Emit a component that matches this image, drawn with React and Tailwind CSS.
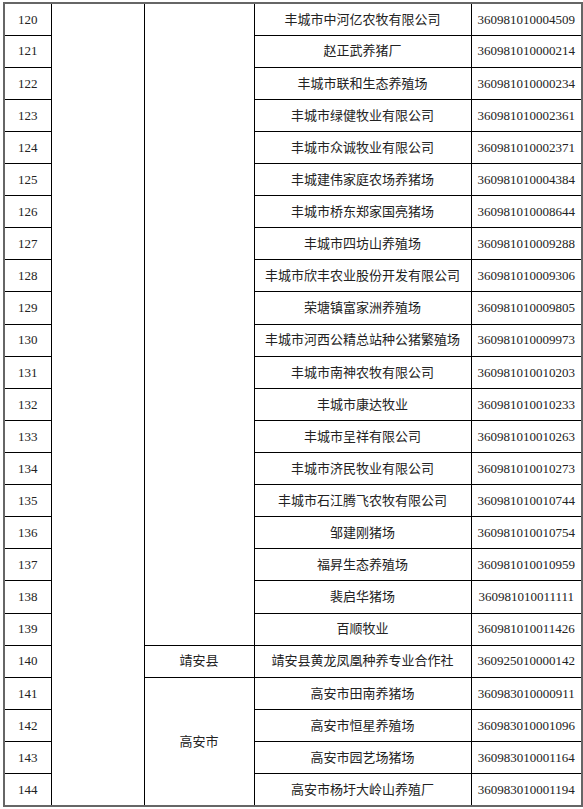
import React from "react";

const rows = [
  ["120", "丰城市中河亿农牧有限公司", "360981010004509"],
  ["121", "赵正武养猪厂", "360981010000214"],
  ["122", "丰城市联和生态养殖场", "360981010000234"],
  ["123", "丰城市绿健牧业有限公司", "360981010002361"],
  ["124", "丰城市众诚牧业有限公司", "360981010002371"],
  ["125", "丰城建伟家庭农场养猪场", "360981010004384"],
  ["126", "丰城市桥东郑家国亮猪场", "360981010008644"],
  ["127", "丰城市四坊山养殖场", "360981010009288"],
  ["128", "丰城市欣丰农业股份开发有限公司", "360981010009306"],
  ["129", "荣塘镇富家洲养殖场", "360981010009805"],
  ["130", "丰城市河西公精总站种公猪繁殖场", "360981010009973"],
  ["131", "丰城市南神农牧有限公司", "360981010010203"],
  ["132", "丰城市康达牧业", "360981010010233"],
  ["133", "丰城市呈祥有限公司", "360981010010263"],
  ["134", "丰城市济民牧业有限公司", "360981010010273"],
  ["135", "丰城市石江腾飞农牧有限公司", "360981010010744"],
  ["136", "邹建刚猪场", "360981010010754"],
  ["137", "福昇生态养殖场", "360981010010959"],
  ["138", "裴启华猪场", "360981010011111"],
  ["139", "百顺牧业", "360981010011426"],
  ["140", "靖安县黄龙凤凰种养专业合作社", "360925010000142"],
  ["141", "高安市田南养猪场", "360983010000911"],
  ["142", "高安市恒星养殖场", "360983010001096"],
  ["143", "高安市园艺场猪场", "360983010001164"],
  ["144", "高安市杨圩大岭山养殖厂", "360983010001194"],
];

const cell = "border border-black text-center align-middle p-0";

export default function App() {
  return (
    <div
      className="bg-white w-[583px] h-[809px] pt-[2px] pl-[3px] text-[13px] text-[#222]"
      style={{ fontFamily: '"Liberation Serif", "Noto Sans CJK SC", serif' }}
    >
      <table className="border-collapse border-2 border-[#666] table-fixed w-[578px]">
        <colgroup>
          <col className="w-[47px]" />
          <col className="w-[93px]" />
          <col className="w-[110px]" />
          <col className="w-[217px]" />
          <col className="w-[111px]" />
        </colgroup>
        <tbody>
          {rows.map((r, i) => (
            <tr key={r[0]} className="h-[32.12px]">
              <td className={cell}>{r[0]}</td>
              {i === 0 && <td className={cell} rowSpan={25}></td>}
              {i === 0 && <td className={cell} rowSpan={20}></td>}
              {i === 20 && <td className={cell}>靖安县</td>}
              {i === 21 && (
                <td className={cell} rowSpan={4}>
                  高安市
                </td>
              )}
              <td className={cell}>{r[1]}</td>
              <td className={cell}>{r[2]}</td>
            </tr>
          ))}
        </tbody>
      </table>
    </div>
  );
}
